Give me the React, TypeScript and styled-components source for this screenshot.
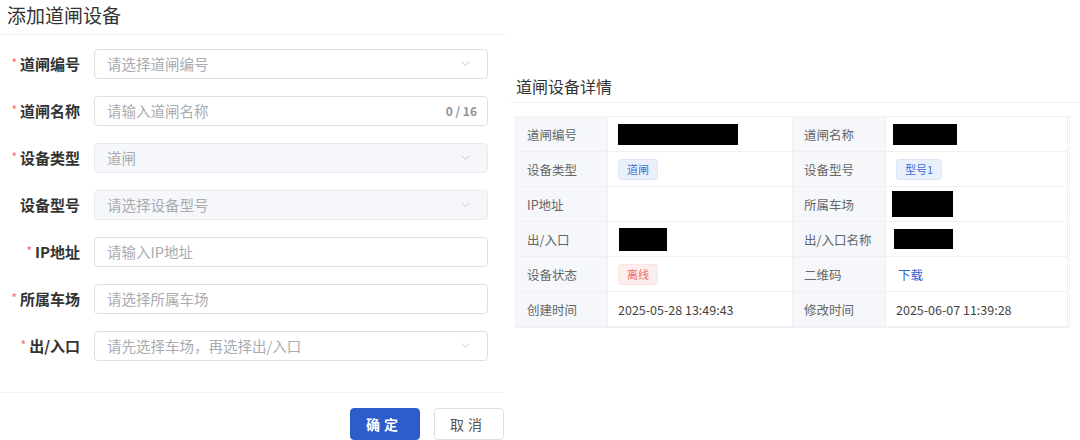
import React from "react";
import styled, { createGlobalStyle } from "styled-components";
import { ChevronDown } from "lucide-react";

const GlobalStyle = createGlobalStyle`
  html, body {
    margin: 0;
    padding: 0;
    background: #fff;
    font-family: "Noto Sans CJK SC", "Noto Sans", "Liberation Sans", sans-serif;
  }
  * { box-sizing: border-box; }
`;

const Page = styled.div`
  width: 1080px;
  height: 440px;
  display: flex;
  overflow: hidden;
`;

const FormPanel = styled.div`
  width: 505px;
  flex-shrink: 0;
  display: flex;
  flex-direction: column;
`;

const FormHeader = styled.div`
  height: 35px;
  padding: 0 0 4px 7px;
  border-bottom: 1px solid #eef0f3;
  display: flex;
  align-items: center;
  font-size: 19px;
  color: #333;
`;

const FormBody = styled.div`
  padding: 14px 15px 0 0;
  display: flex;
  flex-direction: column;
  gap: 17px;
  height: 359px;
  border-bottom: 1px solid #eef0f3;
  margin-right: 2px;
`;

const Row = styled.div`
  display: flex;
  align-items: center;
  height: 30px;
`;

const Label = styled.div`
  width: 94px;
  padding-right: 14px;
  text-align: right;
  font-size: 15px;
  font-weight: 700;
  color: #333;
  white-space: nowrap;
`;

const Star = styled.span`
  color: #f56c6c;
  font-weight: 400;
  font-size: 12px;
  margin-right: 3px;
  vertical-align: 2px;
`;

const Field = styled.div<{ $disabled?: boolean }>`
  flex: 1;
  height: 30px;
  border: 1px solid ${(p) => (p.$disabled ? "#e8eaee" : "#dcdfe6")};
  background: ${(p) => (p.$disabled ? "#f5f7fa" : "#fff")};
  border-radius: 4px;
  display: flex;
  align-items: center;
  padding: 0 12px;
  font-size: 14.5px;
  color: #a8abb2;
`;

const FieldText = styled.span`
  flex: 1;
`;

const Counter = styled.span`
  font-size: 12px;
  font-weight: 700;
  color: #909399;
  margin-right: -2px;
`;

const Arrow = styled(ChevronDown)`
  color: #b4b7be;
  margin-right: 2px;
`;

const Footer = styled.div`
  display: flex;
  justify-content: flex-end;
  gap: 14px;
  padding: 15px 1px 0 0;
`;

const Button = styled.button<{ $primary?: boolean }>`
  width: 70px;
  height: 32px;
  border-radius: 4px;
  font-family: inherit;
  font-size: 14px;
  letter-spacing: 4px;
  padding-left: 4px;
  border: 1px solid ${(p) => (p.$primary ? "#2d5dcb" : "#dcdfe6")};
  background: ${(p) => (p.$primary ? "#2d5dcb" : "#fff")};
  color: ${(p) => (p.$primary ? "#fff" : "#555")};
  font-weight: ${(p) => (p.$primary ? 700 : 400)};
`;

const DetailPanel = styled.div`
  flex: 1;
  min-width: 0;
  margin-left: 5px;
  padding-top: 70px;
  display: flex;
  flex-direction: column;
`;

const DetailHeader = styled.div`
  height: 33px;
  padding-left: 6px;
  border-bottom: 1px solid #eef0f3;
  display: flex;
  align-items: center;
  font-size: 16px;
  color: #333;
`;

const Table = styled.div`
  margin: 13px 10px 0 5px;
  display: grid;
  grid-template-columns: 92px 185px 93px 182px;
  grid-auto-rows: 35px;
  border: 1px solid #f0f2f5;
`;

const Cell = styled.div<{ $label?: boolean }>`
  display: flex;
  align-items: center;
  padding-left: ${(p) => (p.$label ? "11px" : "10px")};
  font-size: 12.5px;
  background: ${(p) => (p.$label ? "#f5f7fa" : "#fff")};
  color: ${(p) => (p.$label ? "#666" : "#444")};
  border-bottom: 1px solid #eef0f4;
  border-right: 1px solid #eef0f4;
`;

const Redacted = styled.div<{ $w: number; $h: number }>`
  width: ${(p) => p.$w}px;
  height: ${(p) => p.$h}px;
  background: #000;
`;

const Tag = styled.span<{ $danger?: boolean }>`
  display: inline-flex;
  align-items: center;
  height: 21px;
  padding: 0 8px;
  border-radius: 3px;
  font-size: 11px;
  background: ${(p) => (p.$danger ? "#fdeeee" : "#eaf0fb")};
  color: ${(p) => (p.$danger ? "#f26b6b" : "#3f6fd1")};
  border: 1px solid ${(p) => (p.$danger ? "#fde2e2" : "#dde6f7")};
`;

const Link = styled.span`
  color: #2f63cf;
  font-size: 12.5px;
`;

type FormItem = {
  label: string;
  required: boolean;
  placeholder: string;
  select?: boolean;
  disabled?: boolean;
  counter?: string;
};

const items: FormItem[] = [
  { label: "道闸编号", required: true, placeholder: "请选择道闸编号", select: true },
  { label: "道闸名称", required: true, placeholder: "请输入道闸名称", counter: "0 / 16" },
  { label: "设备类型", required: true, placeholder: "道闸", select: true, disabled: true },
  { label: "设备型号", required: false, placeholder: "请选择设备型号", select: true, disabled: true },
  { label: "IP地址", required: true, placeholder: "请输入IP地址" },
  { label: "所属车场", required: true, placeholder: "请选择所属车场" },
  { label: "出/入口", required: true, placeholder: "请先选择车场，再选择出/入口", select: true },
];

export default function App() {
  return (
    <Page>
      <GlobalStyle />
      <FormPanel>
        <FormHeader>添加道闸设备</FormHeader>
        <FormBody>
          {items.map((it) => (
            <Row key={it.label}>
              <Label>
                {it.required && <Star>*</Star>}
                {it.label}
              </Label>
              <Field $disabled={it.disabled}>
                <FieldText>{it.placeholder}</FieldText>
                {it.counter && <Counter>{it.counter}</Counter>}
                {it.select && <Arrow size={15} strokeWidth={1.2} />}
              </Field>
            </Row>
          ))}
        </FormBody>
        <Footer>
          <Button $primary>确定</Button>
          <Button>取消</Button>
        </Footer>
      </FormPanel>

      <DetailPanel>
        <DetailHeader>道闸设备详情</DetailHeader>
        <Table>
          <Cell $label>道闸编号</Cell>
          <Cell><Redacted $w={120} $h={21} /></Cell>
          <Cell $label>道闸名称</Cell>
          <Cell style={{ paddingLeft: 7 }}><Redacted $w={64} $h={21} /></Cell>

          <Cell $label>设备类型</Cell>
          <Cell><Tag>道闸</Tag></Cell>
          <Cell $label>设备型号</Cell>
          <Cell><Tag>型号1</Tag></Cell>

          <Cell $label>IP地址</Cell>
          <Cell />
          <Cell $label>所属车场</Cell>
          <Cell style={{ paddingLeft: 6 }}><Redacted $w={61} $h={26} /></Cell>

          <Cell $label>出/入口</Cell>
          <Cell style={{ paddingLeft: 11 }}><Redacted $w={48} $h={23} /></Cell>
          <Cell $label>出/入口名称</Cell>
          <Cell style={{ paddingLeft: 8 }}><Redacted $w={59} $h={20} /></Cell>

          <Cell $label>设备状态</Cell>
          <Cell><Tag $danger>离线</Tag></Cell>
          <Cell $label>二维码</Cell>
          <Cell style={{ paddingLeft: 12 }}><Link>下载</Link></Cell>

          <Cell $label>创建时间</Cell>
          <Cell>2025-05-28 13:49:43</Cell>
          <Cell $label>修改时间</Cell>
          <Cell>2025-06-07 11:39:28</Cell>
        </Table>
      </DetailPanel>
    </Page>
  );
}
